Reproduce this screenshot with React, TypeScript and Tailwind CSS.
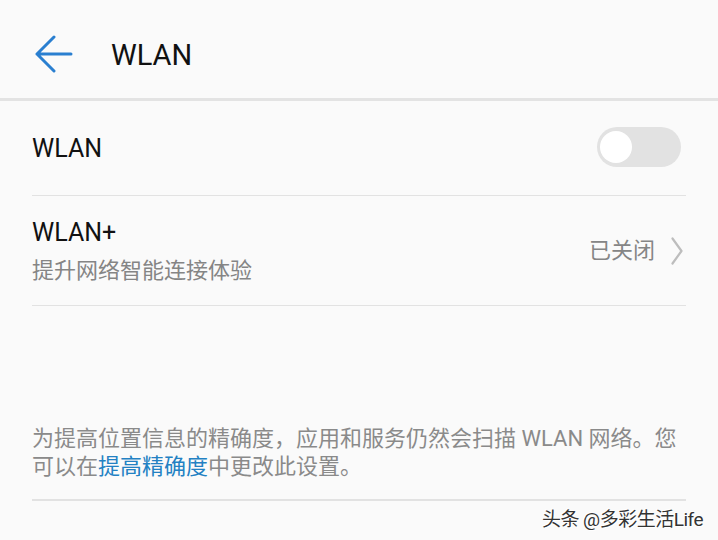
import React from 'react';

const font = { fontFamily: 'Roboto, "Noto Sans CJK SC", sans-serif' };

function BackArrow() {
  return (
    <svg width="38" height="38" viewBox="0 0 38 38" fill="none">
      <path
        d="M19 2 L2 19 L19 36 M2 19 H36"
        stroke="#2a7fd0"
        strokeWidth="3"
        strokeLinecap="round"
        strokeLinejoin="round"
      />
    </svg>
  );
}

function Chevron() {
  return (
    <svg width="12" height="28" viewBox="0 0 12 28" fill="none">
      <path d="M1.5 1.5 L10.5 14 L1.5 26.5" stroke="#bdbdbd" strokeWidth="2.2" strokeLinecap="round" strokeLinejoin="round" />
    </svg>
  );
}

export default function App() {
  return (
    <div className="w-[718px] h-[540px] overflow-hidden bg-[#fafafa] flex flex-col" style={font}>
      {/* header */}
      <div className="h-[98px] pt-[10px] flex items-center">
        <div className="ml-[35px] flex items-center">
          <BackArrow />
        </div>
        <span className="ml-[38px] mt-[4px] text-[29px] text-[#111]">WLAN</span>
      </div>
      <div className="h-[3px] bg-[#e3e3e3]" />

      <div className="px-[32px]">
        {/* WLAN toggle row */}
        <div className="h-[94px] flex items-center justify-between">
          <span className="mt-[2px] text-[25px] text-[#111]">WLAN</span>
          <div className="w-[84px] h-[40px] rounded-full bg-[#e2e2e2] flex items-center px-[3px] mr-[5px] mt-[-3px]">
            <div className="w-[32px] h-[32px] rounded-full bg-white" />
          </div>
        </div>
        <div className="h-px bg-[#e2e2e2]" />

        {/* WLAN+ row */}
        <div className="h-[109px] flex items-center justify-between">
          <div className="flex flex-col">
            <span className="text-[25px] leading-[34px] text-[#111]">WLAN+</span>
            <span className="mt-[6px] text-[22px] leading-[30px] text-[#858585]">提升网络智能连接体验</span>
          </div>
          <div className="flex items-center gap-[16px] mr-[3px]">
            <span className="text-[22px] text-[#858585]">已关闭</span>
            <Chevron />
          </div>
        </div>
        <div className="h-px bg-[#e2e2e2]" />

        {/* note */}
        <p className="mt-[119px] text-[22px] leading-[28px] text-[#8a8a8a] whitespace-nowrap">
          为提高位置信息的精确度，应用和服务仍然会扫描 WLAN 网络。您
          <br />
          可以在<span className="text-[#2381c3]">提高精确度</span>中更改此设置。
        </p>
        <div className="mt-[18px] h-[2px] bg-[#e2e2e2]" />
      </div>

      {/* watermark */}
      <div className="flex justify-end pr-[15px] mt-[5px]">
        <span
          className="text-[19px] text-[#333] tracking-[-0.5px]"
          style={{ textShadow: '1px 1px 0 #fff, -1px -1px 0 #fff' }}
        >
          头条 @多彩生活Life
        </span>
      </div>
    </div>
  );
}
